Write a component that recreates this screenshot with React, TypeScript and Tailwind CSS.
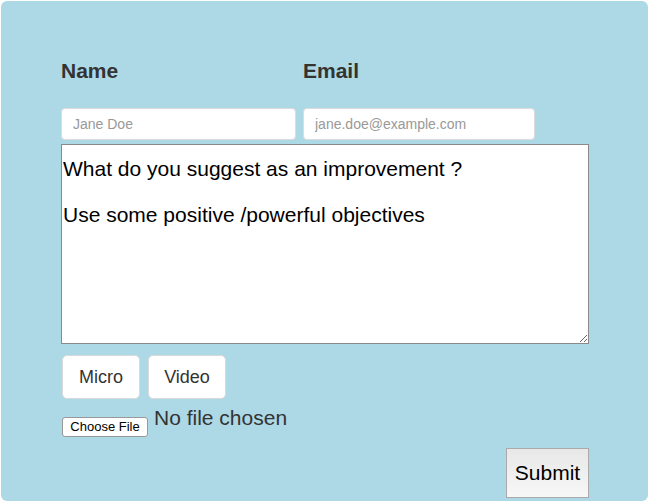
import React from "react";

const feedback =
  "What do you suggest as an improvement ?\n\nUse some positive /powerful objectives";

export default function App() {
  return (
    <div className="min-h-screen bg-white p-px font-['Liberation_Sans',Arial,sans-serif]">
      <div className="h-[500px] rounded-md bg-[#add8e6] pl-[60px] pt-[56px]">
        {/* labels */}
        <div className="flex text-[21px] font-bold leading-[28px] text-[#333]">
          <label className="w-[242px]">Name</label>
          <label>Email</label>
        </div>

        {/* inputs */}
        <div className="mt-[23px] flex gap-[7px]">
          <input
            placeholder="Jane Doe"
            className="h-[32px] w-[235px] rounded-[4px] border border-[#dcdcdc] bg-white px-[11px] text-[14px] text-[#333] placeholder:text-[#999] outline-none"
          />
          <input
            placeholder="jane.doe@example.com"
            className="h-[32px] w-[232px] rounded-[4px] border border-[#dcdcdc] bg-white px-[11px] text-[14px] text-[#333] placeholder:text-[#999] outline-none"
          />
        </div>

        <textarea
          defaultValue={feedback}
          className="mt-[4px] block h-[200px] w-[528px] border border-[#8a8a8a] bg-white px-[1px] pt-[12px] text-[21px] leading-[23px] text-black outline-none"
        />

        {/* media buttons */}
        <div className="mt-[11px] flex gap-[8px] pl-px">
          <button className="h-[44px] w-[78px] rounded-[5px] border border-[#dadada] bg-white text-[18px] text-[#333]">
            Micro
          </button>
          <button className="h-[44px] w-[78px] rounded-[5px] border border-[#dadada] bg-white text-[18px] text-[#333]">
            Video
          </button>
        </div>

        {/* file picker */}
        <div className="mt-[5px] flex items-start gap-[6px] pl-px">
          <button className="mt-[13px] h-[20px] w-[86px] rounded-[3px] border border-[#999] bg-white text-[13px] leading-[16px] text-black">
            Choose File
          </button>
          <span className="text-[21px] leading-[28px] text-[#333]">No file chosen</span>
        </div>

        <div className="mt-[11px] flex w-[528px] justify-end">
          <button className="h-[50px] w-[83px] border border-[#aaa] bg-gradient-to-b from-[#e8e8e8] to-[#f7f7f7] text-[21px] text-black">
            Submit
          </button>
        </div>
      </div>
    </div>
  );
}
